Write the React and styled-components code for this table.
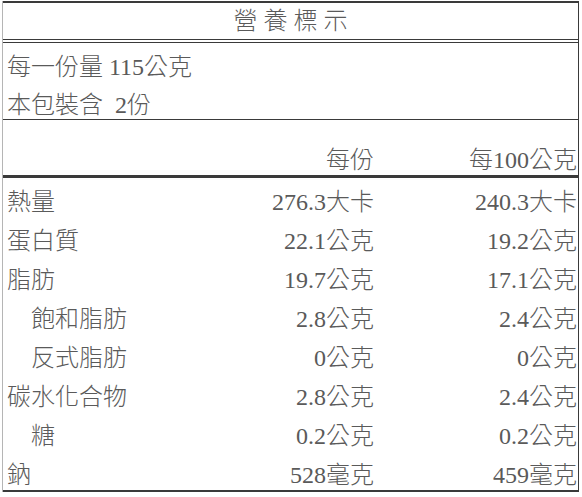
import React from "react";
import styled, { createGlobalStyle } from "styled-components";

const Global = createGlobalStyle`
  html, body { margin: 0; padding: 0; background: #fff; }
  body {
    font-family: "Liberation Serif", "Noto Sans CJK TC", serif;
    color: #5a5a5a;
  }
`;

const Frame = styled.div`
  box-sizing: border-box;
  width: 577px;
  margin: 1px 0 0 2px;
  border-left: 1px solid #b5b5b5;
  border-right: 1px solid #3a3a3a;
  font-size: 24px;
  font-weight: 300;
`;

const Title = styled.div`
  height: 36px;
  border-top: 2px solid #3a3a3a;
  border-bottom: 4px double #3a3a3a;
  display: flex;
  align-items: center;
  justify-content: center;
  letter-spacing: 6px;
  padding-left: 6px;
  line-height: 1;
`;

const Serving = styled.div`
  box-sizing: border-box;
  height: 77px;
  padding: 5px 0 0 4px;
  border-bottom: 1px solid #3a3a3a;
`;

const ServingRow = styled.div`
  height: ${(p) => p.$h}px;
  line-height: 38px;
  white-space: pre;
`;

const Grid = styled.div`
  display: grid;
  grid-template-columns: 1fr 195px 203px;
  padding: 0 1px 0 4px;
  box-sizing: border-box;
`;

const HeadRow = styled(Grid)`
  height: 58px;
  align-items: end;
  padding-bottom: 0;
  box-sizing: border-box;
  border-bottom: 3px solid #3a3a3a;
`;

const Body = styled.div`
  border-bottom: 2px solid #3a3a3a;
`;

const Row = styled(Grid)`
  height: 39px;
  padding-top: 10px;
  align-items: center;
`;

const Label = styled.div`
  padding-left: ${(p) => (p.$sub ? 24 : 0)}px;
  line-height: 29px;
  white-space: nowrap;
`;

const Val = styled.div`
  text-align: right;
  line-height: 29px;
  white-space: nowrap;
`;

const rows = [
  ["熱量", "276.3大卡", "240.3大卡"],
  ["蛋白質", "22.1公克", "19.2公克"],
  ["脂肪", "19.7公克", "17.1公克"],
  ["飽和脂肪", "2.8公克", "2.4公克", true],
  ["反式脂肪", "0公克", "0公克", true],
  ["碳水化合物", "2.8公克", "2.4公克"],
  ["糖", "0.2公克", "0.2公克", true],
  ["鈉", "528毫克", "459毫克"],
];

export default function App() {
  return (
    <>
      <Global />
      <Frame>
        <Title>營養標示</Title>
        <Serving>
          <ServingRow $h={38}>每一份量 115公克</ServingRow>
          <ServingRow $h={34}>本包裝含  2份</ServingRow>
        </Serving>
        <HeadRow>
          <div />
          <Val>每份</Val>
          <Val>每100公克</Val>
        </HeadRow>
        <Body>
          {rows.map(([l, a, b, sub]) => (
            <Row key={l}>
              <Label $sub={sub}>{l}</Label>
              <Val>{a}</Val>
              <Val>{b}</Val>
            </Row>
          ))}
        </Body>
      </Frame>
    </>
  );
}
